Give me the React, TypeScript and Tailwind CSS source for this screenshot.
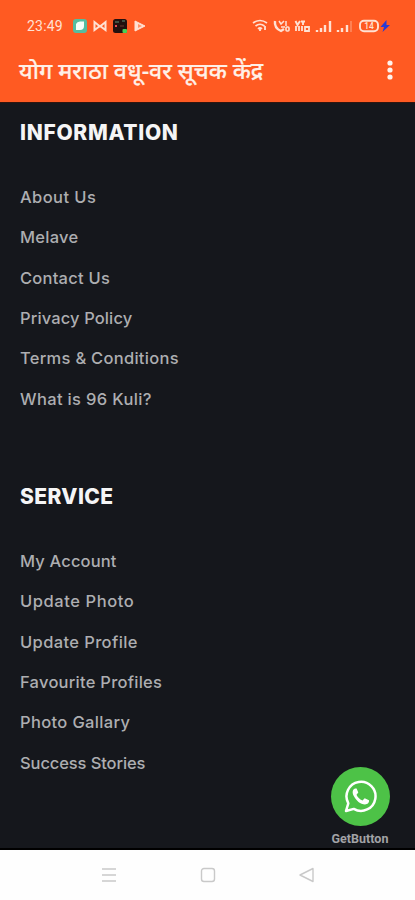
import React from "react";

type Item = { label: string; tracking: string };

const information: Item[] = [
  { label: "About Us", tracking: "tracking-[0.42px]" },
  { label: "Melave", tracking: "tracking-[0.25px]" },
  { label: "Contact Us", tracking: "tracking-[0.23px]" },
  { label: "Privacy Policy", tracking: "tracking-[0.12px]" },
  { label: "Terms & Conditions", tracking: "tracking-[0.28px]" },
  { label: "What is 96 Kuli?", tracking: "tracking-[0.35px]" },
];

const service: Item[] = [
  { label: "My Account", tracking: "tracking-[0.15px]" },
  { label: "Update Photo", tracking: "tracking-[0.57px]" },
  { label: "Update Profile", tracking: "tracking-[0.38px]" },
  { label: "Favourite Profiles", tracking: "tracking-[0.25px]" },
  { label: "Photo Gallary", tracking: "tracking-[0.35px]" },
  { label: "Success Stories", tracking: "tracking-[-0.1px]" },
];

function LinkList({ items }: { items: Item[] }) {
  return (
    <ul className="mt-[26px]">
      {items.map((item) => (
        <li key={item.label} className="flex h-[40.33px] items-center">
          <a className={`whitespace-nowrap text-[16.5px] leading-5 font-medium text-[#adaeb1] ${item.tracking}`}>{item.label}</a>
        </li>
      ))}
    </ul>
  );
}

function StatusBar() {
  return (
    <div className="flex h-[52px] items-center pl-[27px] text-[#ffe1d3]">
      <span className="w-[37px] whitespace-nowrap font-['Roboto',sans-serif] text-[14px] leading-none tracking-[0.2px]">23:49</span>
      <svg className="ml-[8px] h-4 w-[76px]" viewBox="0 0 76 16" aria-hidden="true">
        <rect x="1" y="1" width="14" height="14" rx="3" fill="#55bda0" />
        <path d="M4 6Q5 3.500 8 3.500H12V8Q12 12 8 12H4Z" fill="#f5fff9" />
        <path d="M22.500 12V4L28 8.500 33.500 4V12L28 8Z" fill="none" stroke="currentColor" strokeWidth="2" />
        <rect x="41" y="1" width="14" height="14" rx="2.500" fill="#23100f" />
        <path d="M43 4H47M50 3H53" stroke="#609078" />
        <path d="M44 7V9" stroke="#e84b55" strokeWidth="2" />
        <path d="M48 8H52" stroke="#713a31" />
        <rect x="50.500" y="11" width="4.500" height="4" rx="1" fill="#48cf55" />
        <path d="M63 3V13L73 8Z" fill="currentColor" stroke="currentColor" strokeLinejoin="round" />
        <path d="M66 6L70 8L66 10Z" fill="#ff9268" />
      </svg>
      <svg className="ml-auto mr-[23px] h-4 w-[140px]" viewBox="0 0 140 16" fill="none" stroke="currentColor" aria-hidden="true">
        <path d="M1 5Q8 0 15 5M3.500 8Q8 4.500 12.500 8M6 11Q8 9 10 11" strokeWidth="1.700" />
        <path d="M8 11V13M13 8V12" strokeWidth="1.800" />
        <path d="M23 3Q22 10 29 13L32 11" strokeWidth="2.400" />
        <path d="M27 3L29 6L32 3M34 3V8M29 9H33" strokeWidth="1.500" />
        <rect x="34" y="9" width="3" height="4" rx="1" strokeWidth="1.600" />
        <path d="M43.500 3L45.500 7L48 3M49 3.500H53M51 3V7" strokeWidth="1.900" />
        <path d="M44 8V13M47 8V13M50 8V13M53 9H57V13H53Z" strokeWidth="1.800" />
        <path d="M65 12V14M69 10V14M73 7V14M78 3V14M86 12V14M90 10V14M95 7V14" strokeWidth="2.400" />
        <path d="M99 3V14" stroke="#ff9a75" strokeWidth="1.200" />
        <rect x="108" y="2.800" width="18" height="10.400" rx="4" strokeWidth="1.900" />
        <text x="117" y="11" textAnchor="middle" fill="currentColor" stroke="none" fontFamily="Roboto" fontSize="8.500" fontWeight="500">14</text>
        <path d="M134.500 2L128.500 9H132L130.500 14L138 7H134.500Z" fill="#263bd5" stroke="none" />
      </svg>
    </div>
  );
}

export default function App() {
  return (
    <div className="relative flex h-[900px] w-[415px] flex-col overflow-hidden bg-[#15171c] font-['Inter',sans-serif]">
      <header className="h-[102px] shrink-0 bg-[#ff5a22]">
        <StatusBar />
        <div className="flex h-[36px] items-center justify-between pl-[19px] pr-[22px]">
          <h1 className="whitespace-nowrap font-['Noto_Sans','Noto_Sans_Devanagari',sans-serif] text-[23px] leading-9 font-medium text-[#fff0e7] [-webkit-text-stroke:0.2px_#fff0e7]">योग मराठा वधू-वर सूचक केंद्र</h1>
          <svg className="h-5 w-[6px]" viewBox="0 0 6 20" fill="#fff3ed" aria-hidden="true">
            <circle cx="3" cy="3" r="2.600" /><circle cx="3" cy="10" r="2.600" /><circle cx="3" cy="17" r="2.600" />
          </svg>
        </div>
      </header>
      <main className="flex-1 border-t border-b-2 border-t-[#30150f] border-b-black pl-[20px]">
        <section className="h-[364px] pt-[12px]">
          <h2 className="w-max text-[21px] leading-9 font-extrabold tracking-[0.68px] text-[#f5f5f6]">INFORMATION</h2>
          <LinkList items={information} />
        </section>
        <section className="pt-[12px]">
          <h2 className="w-max text-[21px] leading-9 font-extrabold tracking-[0.4px] text-[#f5f5f6]">SERVICE</h2>
          <LinkList items={service} />
        </section>
      </main>
      <nav className="flex h-[50px] shrink-0 items-center bg-[#fefefe] pl-[101px]">
        <svg className="h-4 w-[214px]" viewBox="0 0 214 16" fill="none" stroke="#c9c9c9" strokeWidth="1.400" aria-hidden="true">
          <path d="M1 2H15M1 8H15M1 14H15" />
          <rect x="100.500" y="1.500" width="13" height="13" rx="2.500" />
          <path d="M212 1.500V14.500L199 8Z" strokeLinejoin="round" />
        </svg>
      </nav>
      <div className="absolute top-[767px] left-[330px] flex w-[60px] flex-col items-center">
        <div className="flex size-[59px] items-center justify-center rounded-full bg-[#4dc247]">
          <svg className="size-[35px]" viewBox="0 0 35 35" fill="none" aria-hidden="true">
            <path d="M3 32L5.300 24.300A14.500 14.500 0 1 1 10.800 29.900Z" stroke="white" strokeWidth="2.500" strokeLinejoin="round" />
            <path d="M12 9.500C9.500 10.500 9 13.500 10.500 16.500C13 21.500 17.500 25.500 22 25.500C24.500 25.500 26.500 23.500 26 21.300L21.700 19.200L19.500 21.500C16.500 20.300 14.500 18 13.500 15.700L15.300 13.500L13.600 9.500Z" fill="white" />
          </svg>
        </div>
        <span className="mt-[6px] whitespace-nowrap font-['Roboto',sans-serif] text-[12.5px] leading-[14px] font-bold text-[#a2a3a6]">GetButton</span>
      </div>
    </div>
  );
}
